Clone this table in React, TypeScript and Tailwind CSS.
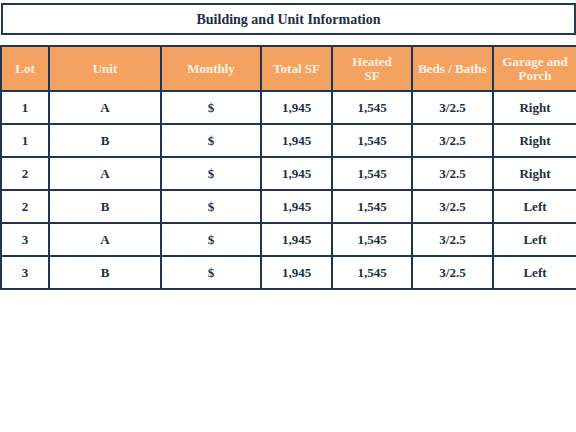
const rows = [
  ["1", "A", "$", "1,945", "1,545", "3/2.5", "Right"],
  ["1", "B", "$", "1,945", "1,545", "3/2.5", "Right"],
  ["2", "A", "$", "1,945", "1,545", "3/2.5", "Right"],
  ["2", "B", "$", "1,945", "1,545", "3/2.5", "Left"],
  ["3", "A", "$", "1,945", "1,545", "3/2.5", "Left"],
  ["3", "B", "$", "1,945", "1,545", "3/2.5", "Left"],
];

const App = () => {
  return (
    <div className="w-[576px] h-[432px] bg-white font-['Liberation_Serif',serif] font-bold text-[#1c2f48]">
      {/* Title */}
      <div className="pt-[3px] pl-[1px]">
        <div className="h-[32px] border-2 border-[#203a58] flex items-center justify-center text-[14px]">
          Building and Unit Information
        </div>
      </div>

      {/* Table */}
      <table className="mt-[10px] w-[576px] table-fixed border-collapse text-[13px] text-center">
        <colgroup>
          <col className="w-[48px]" />
          <col className="w-[112px]" />
          <col className="w-[100px]" />
          <col className="w-[71px]" />
          <col className="w-[80px]" />
          <col className="w-[81px]" />
          <col className="w-[84px]" />
        </colgroup>
        <thead>
          <tr className="h-[45px] bg-[#f4a261] text-[#fdf2e2] leading-[14px]">
            {["Lot", "Unit", "Monthly", "Total SF", "Heated SF", "Beds / Baths", "Garage and Porch"].map(
              (h) => (
                <th key={h} className="border-2 border-[#1e3553] px-1 font-bold">
                  {h === "Heated SF" ? (
                    <>
                      Heated
                      <br />
                      SF
                    </>
                  ) : (
                    h
                  )}
                </th>
              )
            )}
          </tr>
        </thead>
        <tbody>
          {rows.map((r, i) => (
            <tr key={i} className="h-[33px]">
              {r.map((c, j) => (
                <td key={j} className="border-2 border-[#1e3553]">
                  {c}
                </td>
              ))}
            </tr>
          ))}
        </tbody>
      </table>
    </div>
  );
};

export default App;
